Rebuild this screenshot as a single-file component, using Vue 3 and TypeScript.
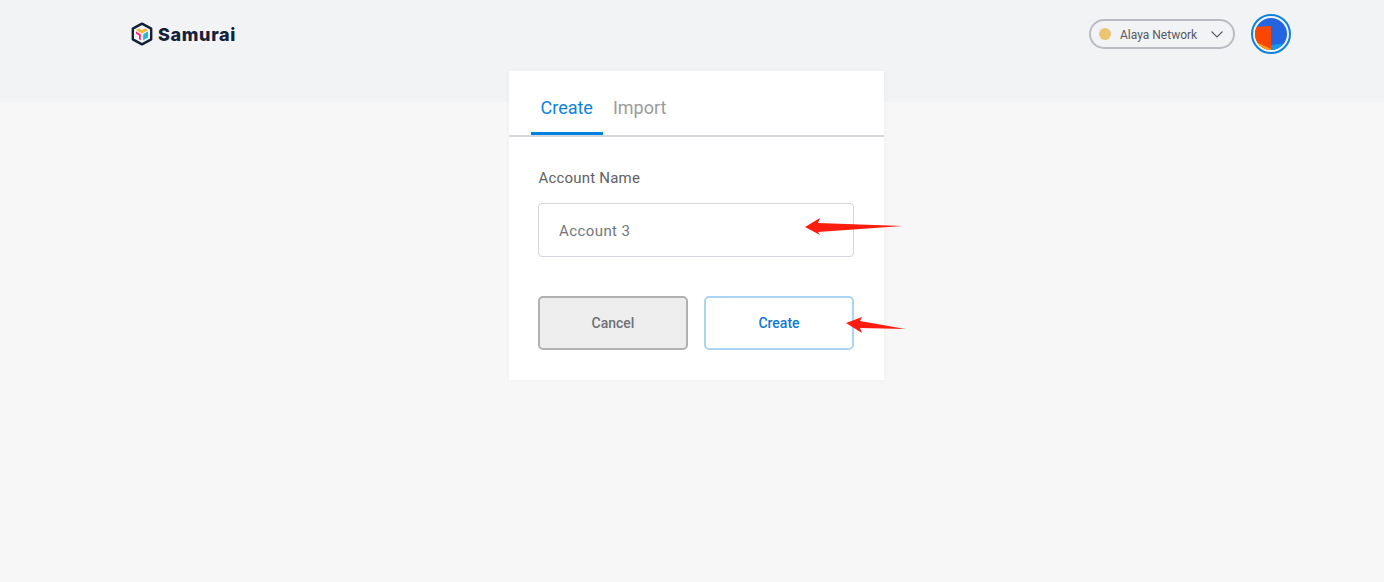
<script setup lang="ts">
const accountName: string = 'Account 3'
</script>

<template>
  <div class="page">
    <header class="header">
      <div class="logo">
        <svg class="logo-mark" width="22" height="24" viewBox="0 0 22 24">
          <path d="M11 1.6 L20.2 6.6 V17.4 L11 22.4 L1.8 17.4 V6.6 Z" fill="none" stroke="#14213a" stroke-width="2.4" stroke-linejoin="round" />
          <path d="M5 8 L8 6.4 L11 8.2 L14 6.4 L17 8 L11 11.4 Z" fill="#f7b52d" />
          <path d="M5 9.4 L9.8 12.2 V18.2 L8 17.2 V13.4 L5 11.8 Z" fill="#ee2e84" />
          <path d="M17 9.4 L12.2 12.2 V18.2 L14 17.2 L17 15.4 Z" fill="#22b8d6" />
        </svg>
        <span class="logo-text">Samurai</span>
      </div>
      <div class="header-right">
        <div class="network">
          <span class="dot"></span>
          <span class="network-name">Alaya Network</span>
          <svg class="chevron" width="12" height="7" viewBox="0 0 12 7">
            <path d="M0.5 0.5 L6 6 L11.5 0.5" fill="none" stroke="#555a62" stroke-width="1.1" />
          </svg>
        </div>
        <div class="avatar">
          <svg width="32" height="32" viewBox="0 0 32 32">
            <defs>
              <clipPath id="avatar-clip"><circle cx="16" cy="16" r="16" /></clipPath>
            </defs>
            <g clip-path="url(#avatar-clip)">
              <rect width="32" height="32" fill="#2464e0" />
              <path d="M16 27 L32 25 V32 H16 Z" fill="#1a95ee" />
              <path d="M0 9 L16 8 V32 H0 Z" fill="#fb4600" />
              <path d="M3 25 L16 31 V32 H3 Z" fill="#f8a010" />
            </g>
          </svg>
        </div>
      </div>
    </header>

    <main class="main">
      <section class="card">
        <nav class="tabs">
          <div class="tab active">Create</div>
          <div class="tab">Import</div>
        </nav>
        <div class="content">
          <div class="label">Account Name</div>
          <div class="input-wrap">
            <input class="input" type="text" :value="accountName" />
            <svg class="arrow arrow-one" width="98" height="18" viewBox="0 0 98 18">
              <path d="M0 9 L15 0 L13 5 L97.5 8 L13 14 L15 17 Z" fill="#fb1d0d" />
            </svg>
          </div>
          <div class="actions">
            <button class="btn cancel" type="button">Cancel</button>
            <div class="create-wrap">
              <button class="btn create" type="button">Create</button>
              <svg class="arrow arrow-two" width="60" height="17" viewBox="0 0 60 17">
                <path d="M0 6 L16 0 L14 4 L59.5 12 L14 11 L16 16 Z" fill="#fb1d0d" />
              </svg>
            </div>
          </div>
        </div>
      </section>
    </main>
  </div>
</template>

<style>
html, body { margin: 0; background: #f7f7f7; }
</style>

<style scoped>
.page {
  min-height: 582px;
  background: #f7f7f7;
  font-family: Roboto, "Liberation Sans", sans-serif;
  overflow: hidden;
}
.header {
  height: 102px;
  box-sizing: border-box;
  background: #f2f3f5;
  display: flex;
  justify-content: space-between;
  align-items: flex-start;
  padding: 14px 93px 0 131px;
}
.logo {
  display: flex;
  align-items: center;
  gap: 5px;
  height: 40px;
}
.logo-mark { display: block; }
.logo-text {
  font-family: Inter, sans-serif;
  font-weight: 800;
  font-size: 18px;
  letter-spacing: 0.65px;
  color: #14213a;
}
.header-right {
  display: flex;
  align-items: center;
  gap: 16px;
}
.network {
  width: 146px;
  height: 30px;
  box-sizing: border-box;
  border: 2px solid #b9bdc3;
  border-radius: 15px;
  display: flex;
  align-items: center;
  padding-left: 8px;
  color: #555a62;
}
.dot {
  width: 12px;
  height: 12px;
  border-radius: 50%;
  background: #edc472;
  margin-right: 9px;
}
.network-name {
  font-size: 12px;
  font-weight: 400;
  flex: 1;
  white-space: nowrap;
  padding-top: 1px;
}
.chevron { margin-right: 10px; margin-top: 0; }
.avatar {
  width: 40px;
  height: 40px;
  box-sizing: border-box;
  border: 2px solid #0f82dc;
  border-radius: 50%;
  display: flex;
  align-items: center;
  justify-content: center;
  background: #f2f3f5;
}
.avatar svg { display: block; }
.main {
  display: flex;
  justify-content: center;
  margin-top: -31px;
  padding-left: 8px;
}
.card {
  width: 375px;
  height: 309px;
  background: #fff;
  box-shadow: 0 0 6px rgba(0, 0, 0, 0.04);
}
.tabs {
  height: 66px;
  box-sizing: border-box;
  border-bottom: 2px solid #d3d7dc;
  padding: 0 22px;
  display: flex;
  gap: 0;
}
.tab {
  height: 64px;
  box-sizing: border-box;
  padding: 25px 10px 0;
  font-size: 18px;
  line-height: 24px;
  color: #9b9b9b;
}
.tab.active {
  color: #0f82dc;
  border-bottom: 3px solid #0080e0;
}
.content {
  padding: 32px 29.5px 0;
}
.label {
  font-size: 15px;
  line-height: 18px;
  letter-spacing: 0.2px;
  padding-left: 0.5px;
  color: #5f6063;
}
.input-wrap {
  position: relative;
  margin-top: 16px;
}
.input {
  display: block;
  width: 100%;
  height: 54px;
  box-sizing: border-box;
  border: 1px solid #d3d6dd;
  border-radius: 4px;
  background: #fff;
  padding: 2px 20px 0;
  outline: none;
  font-family: Roboto, "Liberation Sans", sans-serif;
  font-size: 15px;
  letter-spacing: 0.42px;
  color: #74757a;
}
.arrow { position: absolute; display: block; }
.arrow-one { left: 267px; top: 15px; }
.actions {
  display: flex;
  gap: 16px;
  margin-top: 39px;
}
.create-wrap { position: relative; }
.btn {
  display: block;
  width: 150px;
  height: 54px;
  box-sizing: border-box;
  border-radius: 5px;
  font-family: Roboto, "Liberation Sans", sans-serif;
  font-size: 14px;
  font-weight: 500;
  padding: 0;
}
.cancel {
  background: #eeeeee;
  border: 2px solid #b1b1b1;
  color: #6f7075;
}
.create {
  background: #fff;
  border: 2px solid #acd5f3;
  color: #0f78d4;
}
.arrow-two { left: 142px; top: 21px; }
</style>
